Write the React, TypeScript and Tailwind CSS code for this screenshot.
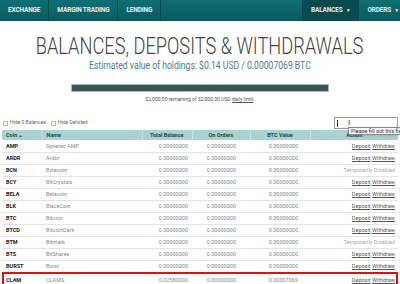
interface Row {
    coin: string;
    name: string;
    total: string;
    btc: string;
    disabled?: boolean;
    marked?: boolean;
}

const rows: Row[] = [
    { coin: "AMP", name: "Synereo AMP", total: "0.00000000", btc: "0.00000000" },
    { coin: "ARDR", name: "Ardor", total: "0.00000000", btc: "0.00000000" },
    { coin: "BCN", name: "Bytecoin", total: "0.00000000", btc: "0.00000000", disabled: true },
    { coin: "BCY", name: "BitCrystals", total: "0.00000000", btc: "0.00000000" },
    { coin: "BELA", name: "Belacoin", total: "0.00000000", btc: "0.00000000" },
    { coin: "BLK", name: "BlackCoin", total: "0.00000000", btc: "0.00000000" },
    { coin: "BTC", name: "Bitcoin", total: "0.00000000", btc: "0.00000000" },
    { coin: "BTCD", name: "BitcoinDark", total: "0.00000000", btc: "0.00000000" },
    { coin: "BTM", name: "Bitmark", total: "0.00000000", btc: "0.00000000", disabled: true },
    { coin: "BTS", name: "BitShares", total: "0.00000000", btc: "0.00000000" },
    { coin: "BURST", name: "Burst", total: "0.00000000", btc: "0.00000000" },
    { coin: "CLAM", name: "CLAMS", total: "0.02580000", btc: "0.00007069", marked: true },
];

function NavItem({ label, active, caret }: { label: string; active?: boolean; caret?: boolean }) {
    return (
        <div
            className={
                "flex items-center px-[8px] h-full text-[6.5px] font-bold tracking-tight text-white/90 whitespace-nowrap " +
                (active ? "bg-[#094a4e]" : "")
            }
        >
            {label}
            {caret && <span className="text-[5px] ml-[3px]">▼</span>}
        </div>
    );
}

export default function App() {
    return (
        <div className="w-[400px] h-[284px] overflow-hidden bg-white font-['Roboto',sans-serif]">
            {/* top bar */}
            <div className="h-[21px] flex justify-between bg-gradient-to-b from-[#0f6f73] to-[#0a5a5e]">
                <div className="flex h-full">
                    <NavItem label="EXCHANGE" />
                    <div className="w-px bg-[#08484b]" />
                    <NavItem label="MARGIN TRADING" />
                    <div className="w-px bg-[#08484b]" />
                    <NavItem label="LENDING" />
                    <div className="w-px bg-[#08484b]" />
                </div>
                <div className="flex h-full mr-[-7px]">
                    <div className="w-px bg-[#08484b]" />
                    <NavItem label="BALANCES" active caret />
                    <div className="w-px bg-[#08484b]" />
                    <NavItem label="ORDERS" caret />
                </div>
            </div>

            {/* heading */}
            <div className="flex flex-col items-center mt-[12px]">
                <h1 className="whitespace-nowrap text-[24px] leading-[27px] font-light text-[#444] scale-x-[0.76]">
                    BALANCES, DEPOSITS &amp; WITHDRAWALS
                </h1>
                <p className="whitespace-nowrap text-[10px] leading-[12px] text-[#4b7d8b] scale-x-[0.86]">
                    Estimated value of holdings: $0.14 USD / 0.00007069 BTC
                </p>
            </div>

            <div className="mx-auto mt-[12px] w-[258px] h-[8px] border border-[#a9bcbc] bg-[#3c5557]" />
            <p className="text-center text-[5px] leading-[6px] mt-[4px] text-[#555]">
                $2,000.00 remaining of $2,000.00 USD <span className="underline">daily limit</span>.
            </p>

            {/* controls */}
            <div className="relative flex items-center justify-between px-[3px] mt-[15px] h-[12px]">
                <div className="flex items-center gap-[5px] text-[5px] text-[#666]">
                    <label className="flex items-center gap-[2px]">
                        <span className="w-[5px] h-[5px] border border-[#bbb] bg-[#f4f4f4]" />
                        Hide 0 Balances
                    </label>
                    <label className="flex items-center gap-[2px]">
                        <span className="w-[5px] h-[5px] border border-[#bbb] bg-[#f4f4f4]" />
                        Hide Delisted
                    </label>
                </div>
                <div className="w-[64px] h-[12px] border border-[#999] bg-white mr-[-1px] flex items-center pl-[2px]">
                    <span className="w-px h-[7px] bg-[#333]" />
                </div>
                <div className="absolute left-[348px] top-[10px] z-10 px-[2px] border border-[#888] bg-[#f8f8f8] text-[5.5px] leading-[6px] text-[#333] shadow-sm whitespace-nowrap">
                    Please fill out this field.
                </div>
                <span className="absolute left-[348px] top-[2px] text-[8px] leading-[8px] text-[#333]">I</span>
            </div>

            {/* table */}
            <table className="mx-[2px] mt-[1px] w-[396px] border-collapse text-[5.5px] table-fixed">
                <colgroup>
                    <col className="w-[40px]" />
                    <col className="w-[100px]" />
                    <col className="w-[50px]" />
                    <col className="w-[58px]" />
                    <col className="w-[60px]" />
                    <col className="w-[88px]" />
                </colgroup>
                <thead>
                    <tr className="h-[10px] bg-[#a9d3d2] text-[#1d4a4a]">
                        <th className="text-left pl-[4px] border-r border-[#c8e4e3] font-bold">
                            Coin <span className="text-[4px]">▲</span>
                        </th>
                        <th className="text-left pl-[4px] border-r border-[#c8e4e3] font-bold">Name</th>
                        <th className="text-right pr-[8px] border-r border-[#c8e4e3] font-bold">Total Balance</th>
                        <th className="text-center border-r border-[#c8e4e3] font-bold">On Orders</th>
                        <th className="text-center border-r border-[#c8e4e3] font-bold">BTC Value</th>
                        <th className="text-center font-bold">Action</th>
                    </tr>
                </thead>
                <tbody>
                    {rows.map((r) => (
                        <tr
                            key={r.coin}
                            className={
                                r.marked
                                    ? "h-[15px] outline-2 outline-solid outline-[#e01010] -outline-offset-2"
                                    : "h-[12px] border-b border-[#e4e4e4]"
                            }
                        >
                            <td className="pl-[4px] font-bold text-[#222]">{r.coin}</td>
                            <td className="pl-[4px] text-[#888]">{r.name}</td>
                            <td className="text-right pr-[4px] text-[#888]">{r.total}</td>
                            <td className="text-right pr-[14px] text-[#888]">0.00000000</td>
                            <td className="text-right pr-[12px] text-[#888]">{r.btc}</td>
                            <td className="text-right pr-[3px]">
                                {r.disabled ? (
                                    <span className="text-[#aaa]">Temporarily Disabled</span>
                                ) : (
                                    <span className="text-[#555]">
                                        <span className="underline">Deposit</span>{" "}
                                        <span className="underline">Withdraw</span>
                                    </span>
                                )}
                            </td>
                        </tr>
                    ))}
                </tbody>
            </table>
        </div>
    );
}
